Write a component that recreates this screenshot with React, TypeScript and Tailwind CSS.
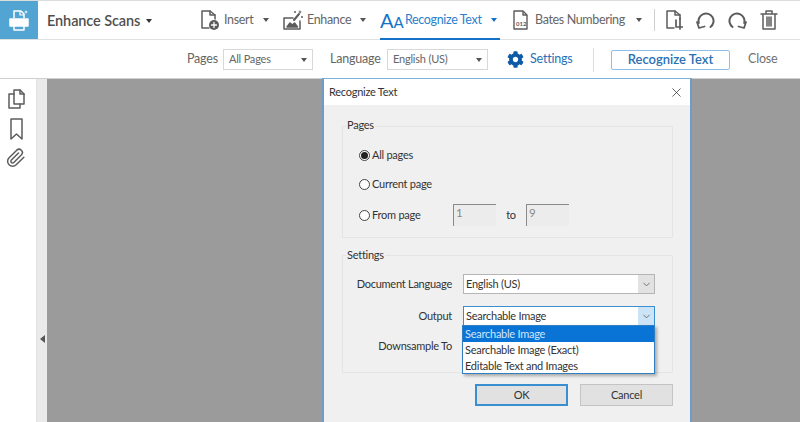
import { ChevronDown, X } from "lucide-react";
import { FaCog } from "react-icons/fa";

const Caret = ({ className = "border-t-[#555]" }: { className?: string }) => (
  <span className={`inline-block h-0 w-0 border-x-[3px] border-t-[4px] border-x-transparent ${className}`} />
);

function ToolIcon({ children, w = 20 }: { children: React.ReactNode; w?: number }) {
  return (
    <svg width={w} height="22" viewBox={`0 0 ${w} 22`} fill="none" stroke="#5c5c5c" strokeWidth="1.5" strokeLinejoin="round" strokeLinecap="round">
      {children}
    </svg>
  );
}

function ToolButton({ icon, label, width }: { icon: React.ReactNode; label: string; width: string }) {
  return (
    <div className={`flex items-center whitespace-nowrap ${width}`}>
      {icon}
      <span className="ml-[4px] pt-px text-[12.5px] tracking-[-0.35px] text-[#666]">{label}</span>
      <span className="ml-auto mr-[14px] flex"><Caret /></span>
    </div>
  );
}

function Select({ label, width }: { label: string; width: string }) {
  return (
    <div className={`flex h-[21px] items-center justify-between border border-[#d8d8d8] bg-white pl-[5px] pr-[5px] text-[11px] tracking-[-0.2px] text-[#666] ${width}`}>
      {label}
      <Caret />
    </div>
  );
}

function Radio({ label, checked }: { label: string; checked?: boolean }) {
  return (
    <div className="flex items-center gap-[2px]">
      <span className="flex h-[11px] w-[11px] items-center justify-center rounded-full border border-[#444] bg-white">
        {checked && <span className="h-[7px] w-[7px] rounded-full bg-[#222]" />}
      </span>
      <span>{label}</span>
    </div>
  );
}

function PageInput({ value }: { value: string }) {
  return (
    <div className="h-[22px] w-[43px] border-t border-l border-t-[#8a8a8a] border-l-[#8a8a8a] bg-[#ececec] pl-[2px] text-[11.5px] leading-[16px] text-[#888]">
      {value}
    </div>
  );
}

function Combo({ label, active }: { label: string; active?: boolean }) {
  return (
    <div className={`flex h-[20px] w-[192px] items-center justify-between border pl-[2px] ${active ? "border-[#3a8fd0] bg-white" : "border-[#b5b5b5] bg-white"}`}>
      <span>{label}</span>
      <span className={`flex h-full w-[16px] items-center justify-center ${active ? "bg-[#cce4f7]" : "bg-[#e2e2e2]"}`}>
        <ChevronDown size={11} strokeWidth={2} color="#666" />
      </span>
    </div>
  );
}

export default function App() {
  return (
    <div className="relative flex h-[422px] w-[800px] flex-col overflow-hidden bg-white font-['Lato',sans-serif]">
      {/* top toolbar */}
      <div className="flex h-[40px] shrink-0 items-stretch border-t border-b border-t-[#dcdcdc] border-b-[#e0e0e0] bg-white">
        <div className="flex w-[38px] items-center justify-center bg-[#52a5d3]">
          <svg width="22" height="24" viewBox="0 0 22 24" fill="none" stroke="white" strokeWidth="1.5" strokeLinejoin="round">
            <path d="M6 10V3h7l3 3v4" />
            <path d="M12 3v4h4" strokeWidth="1.2" />
            <path d="M2 11h18v7H2z" fill="white" />
            <path d="M6 18v4h10v-4" />
            <path d="M18 2l.5 1.5L20 4l-1.5.5L18 6l-.5-1.5L16 4l1.5-.5z" fill="white" stroke="none" />
          </svg>
        </div>
        <div className="flex w-[162px] items-center whitespace-nowrap pl-[9px] pt-px text-[14.5px] font-semibold tracking-[-0.1px] text-[#505050]">
          Enhance Scans
          <span className="ml-[6px] flex"><Caret className="border-t-[#333]" /></span>
        </div>
        <ToolButton
          width="w-[83px]"
          label="Insert"
          icon={
            <ToolIcon>
              <path d="M9 19H2V2h8l5 4v4" />
              <path d="M10 2v4h5" />
              <circle cx="14" cy="16" r="5" fill="#5c5c5c" stroke="none" />
              <path d="M14 13.5v5M11.5 16h5" stroke="white" strokeWidth="1.3" />
            </ToolIcon>
          }
        />
        <ToolButton
          width="w-[97px]"
          label="Enhance"
          icon={
            <ToolIcon>
              <path d="M1 9h9M17 12v8H1V9" />
              <path d="M4 18l3-4 2.5 2 2-2 3 4z" fill="#5c5c5c" />
              <path d="M11 11l5-6" strokeWidth="2" />
              <path d="M17 1l.6 1.4L19 3l-1.4.6L17 5l-.6-1.4L15 3l1.4-.6z" fill="#5c5c5c" stroke="none" />
              <circle cx="12" cy="3" r="1" fill="#5c5c5c" stroke="none" />
              <circle cx="19" cy="8" r="1" fill="#5c5c5c" stroke="none" />
            </ToolIcon>
          }
        />
        <div className="-mb-px flex w-[120px] items-center whitespace-nowrap border-b-2 border-[#1473c9]">
          <span className="w-[25px] text-[20px] leading-none text-[#1473c9]">A<span className="text-[15px]">A</span></span>
          <span className="pt-px text-[12.5px] tracking-[-0.35px] text-[#2a80cc]">Recognize Text</span>
          <span className="ml-auto mr-[3px] flex"><Caret className="border-t-[#1473c9]" /></span>
        </div>
        <div className="ml-[13px] flex w-[129px] items-center whitespace-nowrap">
          <svg width="15" height="22" viewBox="0 0 15 22" fill="none" stroke="#5c5c5c" strokeWidth="1.4" strokeLinejoin="round">
            <path d="M1 2h9l4 4v14H1z" />
            <path d="M10 2v4h4" />
            <text x="3" y="16.5" fontSize="6" fontWeight="700" fill="#5c5c5c" stroke="none" fontFamily="Lato">012</text>
          </svg>
          <span className="ml-[7px] pt-px text-[12.5px] tracking-[-0.35px] text-[#666]">Bates Numbering</span>
          <span className="ml-auto flex"><Caret /></span>
        </div>
        <div className="my-[8px] ml-[12px] w-px bg-[#cfcfcf]" />
        <div className="ml-[11px] flex items-center gap-[13px]">
          <ToolIcon w={17}>
            <path d="M8 19H1V2h8l5 4v4" />
            <path d="M9 2v4h5" />
            <path d="M10 11v7h7M14 9v11" strokeWidth="1.7" />
          </ToolIcon>
          <ToolIcon w={19}>
            <path d="M14.5 18A7.5 7.5 0 1 0 2.8 14" strokeWidth="2" />
            <path d="M1 13l2 6 5.5-1.5" strokeWidth="1.8" />
          </ToolIcon>
          <ToolIcon w={19}>
            <path d="M4.5 18A7.5 7.5 0 1 1 16.2 14" strokeWidth="2" />
            <path d="M18 13l-2 6-5.5-1.5" strokeWidth="1.8" />
          </ToolIcon>
          <ToolIcon w={18}>
            <path d="M1 5h16M6 5V2h6v3M3 5v15h12V5M7 8v9M9 8v9M11 8v9" />
          </ToolIcon>
        </div>
      </div>

      {/* secondary toolbar */}
      <div className="flex h-[39px] shrink-0 items-center whitespace-nowrap border-b border-[#cfcfcf] bg-white pl-[187px] pt-px">
        <span className="w-[36px] text-[12.5px] tracking-[-0.2px] text-[#666]">Pages</span>
        <Select label="All Pages" width="w-[90px]" />
        <span className="ml-[17px] w-[57px] text-[12.5px] tracking-[-0.2px] text-[#666]">Language</span>
        <Select label="English (US)" width="w-[101px]" />
        <FaCog size={17} className="ml-[19px]" color="#0d5aa7" />
        <span className="ml-[6px] w-[43px] text-[12.5px] tracking-[-0.2px] text-[#2a70b5]">Settings</span>
        <div className="ml-[20px] h-[24px] w-px bg-[#dcdcdc]" />
        <div className="ml-[17px] flex h-[20px] w-[119px] items-center justify-center rounded-[2px] border border-[#8fbfe6] text-[13px] font-semibold text-[#2a70b5]">
          Recognize Text
        </div>
        <span className="ml-[18px] text-[12.5px] tracking-[-0.2px] text-[#707070]">Close</span>
      </div>

      {/* body */}
      <div className="flex min-h-0 flex-1">
        <div className="flex w-[37px] shrink-0 flex-col items-center gap-[8px] border-r border-[#e2e2e2] bg-white pt-[9px] pr-[4px]">
          <ToolIcon w={18}>
            <path d="M7 2h6l4 4v10H7z" />
            <path d="M13 2v4h4" />
            <path d="M7 6H2v14h11v-4" />
          </ToolIcon>
          <ToolIcon w={14}>
            <path d="M2 1h11v20l-5.5-5L2 21z" />
          </ToolIcon>
          <svg width="20" height="20" viewBox="0 0 24 24" fill="none" stroke="#5c5c5c" strokeWidth="1.8" strokeLinecap="round" strokeLinejoin="round">
            <path d="M21.4 11.1l-9.2 9.1a6 6 0 0 1-8.5-8.5l9.2-9.1a4 4 0 0 1 5.7 5.6l-9.2 9.2a2 2 0 0 1-2.9-2.9l8.5-8.4" />
          </svg>
        </div>
        <div className="flex w-[10px] shrink-0 justify-center bg-[#eaeaea] pt-[256px]">
          <span className="h-0 w-0 border-y-[4px] border-r-[5px] border-y-transparent border-r-[#555]" />
        </div>
        <div className="flex-1 bg-[#9b9b9b]" />
      </div>

      {/* dialog */}
      <div className="absolute left-[322px] top-[78px] flex h-[344px] w-[370px] flex-col border-x-2 border-t border-x-[#6f9cc4] border-t-[#7fb2da] bg-[#f0f0f0] text-[11px] tracking-[-0.25px] text-[#333]">
        <div className="flex h-[26px] shrink-0 items-center justify-between bg-white pl-[5px] pr-[6px]">
          <span>Recognize Text</span>
          <X size={15} strokeWidth={1.2} color="#333" />
        </div>

        <div className="relative ml-[18px] mt-[21px] h-[112px] w-[331px] rounded-[1px] border border-[#e4e4e4]">
          <span className="absolute -top-[10px] left-[3px] bg-[#f0f0f0] px-[1px]">Pages</span>
          <div className="flex flex-col pl-[16px] pt-[20px]">
            <div className="h-[29px]"><Radio label="All pages" checked /></div>
            <div className="h-[28px]"><Radio label="Current page" /></div>
            <div className="flex h-[22px] items-center">
              <div className="w-[94px]"><Radio label="From page" /></div>
              <PageInput value="1" />
              <span className="w-[30px] text-center">to</span>
              <PageInput value="9" />
            </div>
          </div>
        </div>

        <div className="relative ml-[18px] mt-[17px] h-[118px] w-[331px] rounded-[1px] border border-[#e4e4e4]">
          <span className="absolute -top-[9px] left-[3px] bg-[#f0f0f0] px-[1px]">Settings</span>
          <div className="flex flex-col gap-[12px] pt-[18px]">
            <div className="flex items-center">
              <span className="w-[109px] text-right">Document Language</span>
              <div className="ml-[11px]"><Combo label="English (US)" /></div>
            </div>
            <div className="relative flex items-center">
              <span className="w-[109px] text-right">Output</span>
              <div className="ml-[11px]"><Combo label="Searchable Image" active /></div>
              <div className="absolute left-[119px] top-[19px] z-10 w-[193px] border border-[#2f7fc1] bg-white shadow-[2px_2px_3px_rgba(0,0,0,0.3)]">
                <div className="h-[16px] bg-[#0a74d6] pl-[2px] leading-[16px] text-[#cfe6fa]">Searchable Image</div>
                <div className="h-[16px] pl-[2px] leading-[16px]">Searchable Image (Exact)</div>
                <div className="h-[15px] pl-[2px] leading-[15px]">Editable Text and Images</div>
              </div>
            </div>
            <div className="flex items-center">
              <span className="w-[109px] text-right">Downsample To</span>
            </div>
          </div>
        </div>

        <div className="ml-[151px] mt-[11px] flex gap-[12px]">
          <div className="flex h-[22px] w-[93px] items-center justify-center border-2 border-[#3a8fd0] bg-[#e1e1e1]">OK</div>
          <div className="flex h-[22px] w-[93px] items-center justify-center border border-[#c4c4c4] bg-[#e1e1e1]">Cancel</div>
        </div>
      </div>
    </div>
  );
}
